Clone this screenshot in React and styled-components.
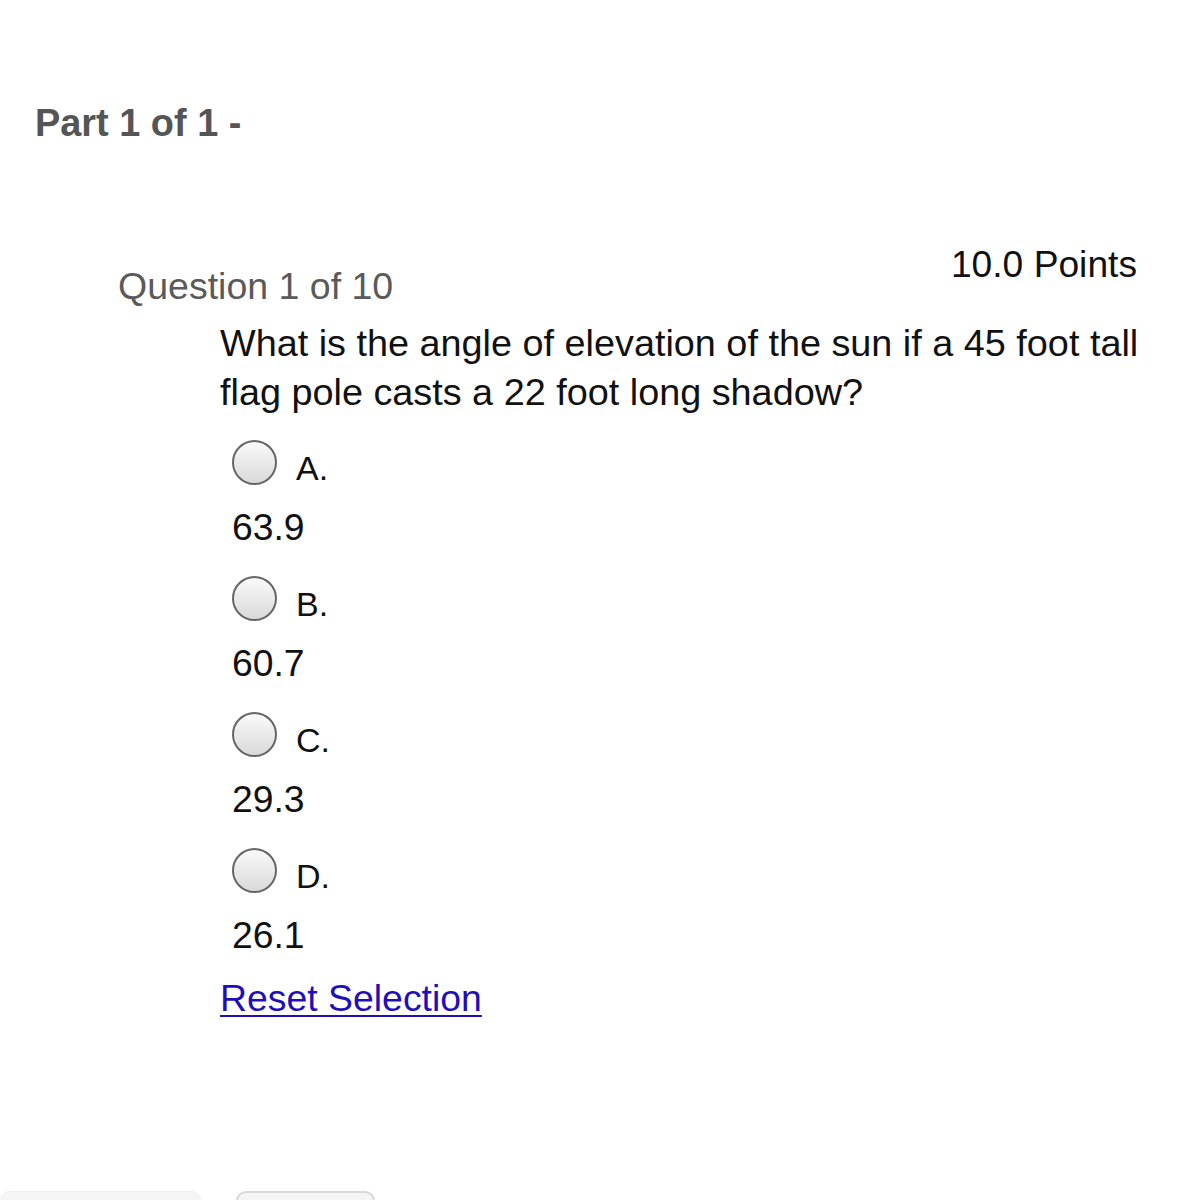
import React from "react";
import styled, { createGlobalStyle } from "styled-components";

const Global = createGlobalStyle`
  html, body { margin: 0; padding: 0; background: #fff; }
  body { font-family: "Liberation Sans", Arial, Helvetica, sans-serif; }
`;

const Page = styled.div`
  width: 1198px;
  height: 1200px;
  overflow: hidden;
  box-sizing: border-box;
  padding: 102px 61px 0 35px;
`;

const PartTitle = styled.h1`
  margin: 0;
  font-size: 37.9px;
  line-height: 42px;
  font-weight: bold;
  color: #555;
`;

const QuestionHeader = styled.div`
  margin-top: 98px;
  display: flex;
  justify-content: space-between;
  align-items: flex-start;
  padding-left: 83px;
`;

const QuestionLabel = styled.div`
  margin-top: 22px;
  font-size: 37.5px;
  line-height: 44px;
  color: #5a5a5a;
`;

const Points = styled.div`
  font-size: 37.2px;
  line-height: 44px;
  color: #111;
`;

const Body = styled.div`
  margin-top: 11px;
  padding-left: 185px;
  display: flex;
  flex-direction: column;
`;

const Prompt = styled.p`
  margin: 0 -30px 0 0;
  font-size: 37.8px;
  line-height: 49px;
  color: #111;
`;

const Options = styled.div`
  margin-top: 23px;
  padding-left: 12px;
  display: flex;
  flex-direction: column;
  gap: 27px;
`;

const Option = styled.div`
  display: flex;
  flex-direction: column;
  gap: 20px;
`;

const ChoiceRow = styled.label`
  display: flex;
  align-items: flex-start;
  height: 45px;
  gap: 19px;
  cursor: pointer;
`;

const Radio = styled.span`
  display: block;
  width: 45px;
  height: 45px;
  box-sizing: border-box;
  border-radius: 50%;
  border: 2.5px solid #666;
  background: linear-gradient(#fafafa, #d9d9d9);
`;

const Letter = styled.span`
  margin-top: 12px;
  font-size: 34px;
  line-height: 33px;
  color: #111;
`;

const Answer = styled.div`
  font-size: 37.3px;
  line-height: 44px;
  color: #111;
`;

const Reset = styled.a`
  margin-top: 19px;
  align-self: flex-start;
  font-size: 37.4px;
  line-height: 44px;
  color: #1f0fb8;
  text-decoration: underline;
  text-decoration-thickness: 2px;
  text-underline-offset: 4px;
`;

const Footer = styled.div`
  margin-top: 171px;
  margin-left: -35px;
  display: flex;
  gap: 35px;
`;

const FooterButton = styled.div`
  flex: none;
  width: ${(p) => p.$w}px;
  height: 40px;
  box-sizing: border-box;
  border-radius: 10px;
  background: #f5f5f5;
  border: ${(p) => (p.$outlined ? "2px solid #d6d9db" : "1px solid #eeeeee")};
`;

const options = [
  { letter: "A.", value: "63.9" },
  { letter: "B.", value: "60.7" },
  { letter: "C.", value: "29.3" },
  { letter: "D.", value: "26.1" },
];

export default function App() {
  return (
    <>
      <Global />
      <Page>
        <PartTitle>Part 1 of 1 -</PartTitle>
        <QuestionHeader>
          <QuestionLabel>Question 1 of 10</QuestionLabel>
          <Points>10.0 Points</Points>
        </QuestionHeader>
        <Body>
          <Prompt>
            What is the angle of elevation of the sun if a 45 foot tall flag
            pole casts a 22 foot long shadow?
          </Prompt>
          <Options>
            {options.map((o) => (
              <Option key={o.letter}>
                <ChoiceRow>
                  <Radio />
                  <Letter>{o.letter}</Letter>
                </ChoiceRow>
                <Answer>{o.value}</Answer>
              </Option>
            ))}
          </Options>
          <Reset href="#">Reset Selection</Reset>
        </Body>
        <Footer>
          <FooterButton $w={201} />
          <FooterButton $w={139} $outlined />
        </Footer>
      </Page>
    </>
  );
}
